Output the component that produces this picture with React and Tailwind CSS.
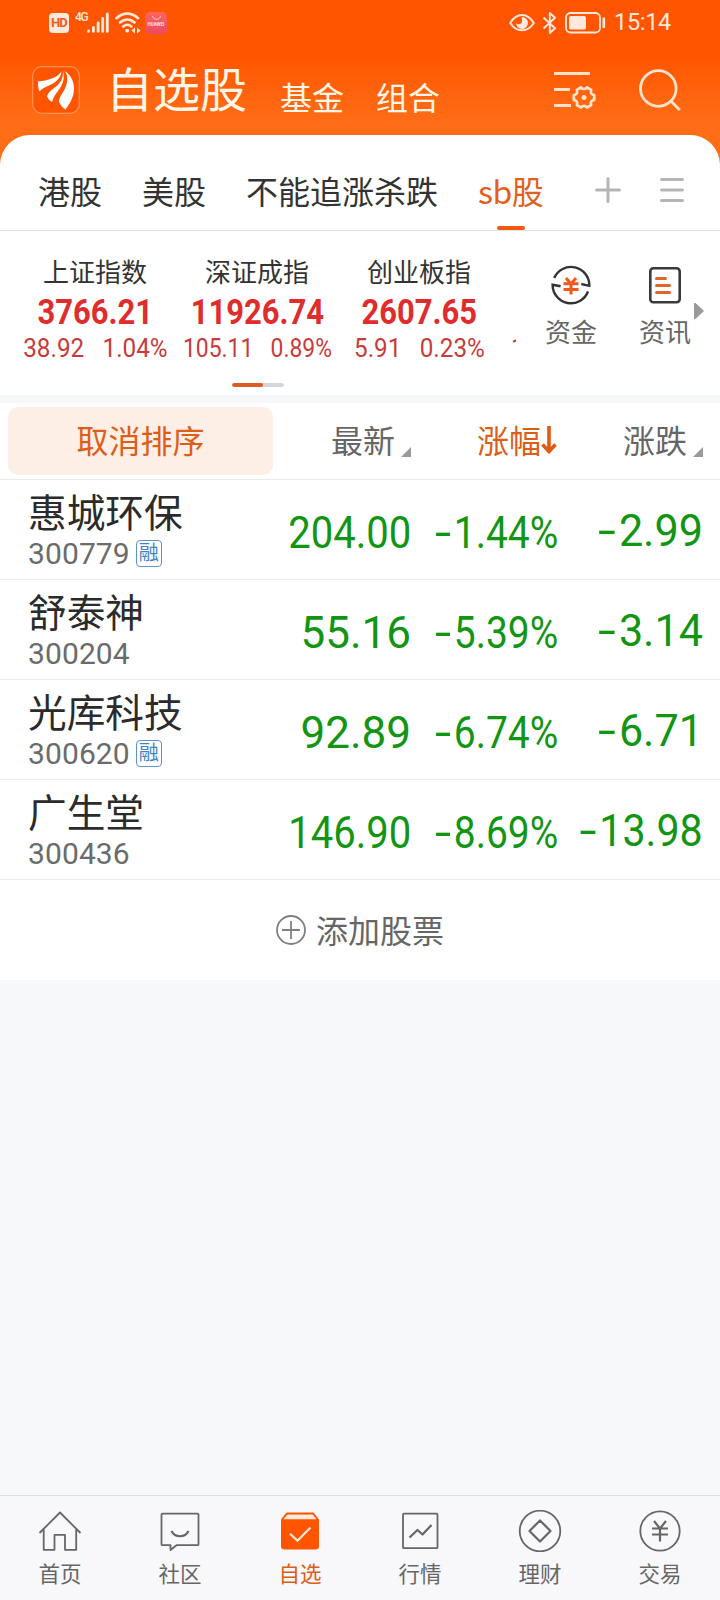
import React from "react";

const CJK = "font-['Noto_Sans_CJK_SC',sans-serif]";
const NUM = "font-['Roboto',sans-serif]";

const stocks = [
  { name: "惠城环保", code: "300779", margin: true, price: "204.00", pct: "1.44%", chg: "2.99" },
  { name: "舒泰神", code: "300204", margin: false, price: "55.16", pct: "5.39%", chg: "3.14" },
  { name: "光库科技", code: "300620", margin: true, price: "92.89", pct: "6.74%", chg: "6.71" },
  { name: "广生堂", code: "300436", margin: false, price: "146.90", pct: "8.69%", chg: "13.98" },
];

const indices = [
  { name: "上证指数", value: "3766.21", diff: "38.92", pct: "1.04%" },
  { name: "深证成指", value: "11926.74", diff: "105.11", pct: "0.89%" },
  { name: "创业板指", value: "2607.65", diff: "5.91", pct: "0.23%" },
];

function StatusBar() {
  return (
    <div className="flex h-[46px] items-center pl-[49px] pr-[48px] text-[#ffe9dc]">
      <div className={`${NUM} flex h-5 w-5 items-center justify-center rounded-[4px] bg-[#ffe9dc] text-[13px] font-bold tracking-[-0.8px] text-[#f4591a]`}>HD</div>
      <span className={`${NUM} ml-[6px] mb-[13px] w-[12px] text-[12px] font-medium leading-none tracking-[-1.2px]`}>4G</span>
      <svg className="h-[22px] w-[22px]" viewBox="0 0 22 22" stroke="currentColor" strokeWidth="2.8" strokeLinecap="round">
        <path d="M1.6 19.4v-.6M6.4 19.4v-4M11.1 19.4V11M15.7 19.4V6.5M20.3 19.4V2" />
      </svg>
      <svg className="ml-[6px] h-[22px] w-[26px]" viewBox="0 0 26 22" fill="none" stroke="currentColor" strokeWidth="2.6" strokeLinecap="round">
        <path d="M1.500 6.200C8 .1 16.500 .1 23 6.200M5 10.500c4.500-4 10-4 14.500 0M8.300 14.500c2.500-2.200 5.500-2.200 8 0" />
        <circle cx="12.200" cy="18.700" r="1.900" fill="currentColor" stroke="none" />
        <path d="M20 15.500v6l-3.500-3zM22 15.500v6l3.500-3z" fill="currentColor" stroke="none" />
      </svg>
      <div className="ml-[4px] flex h-[22px] w-[22px] flex-col items-center rounded-[5px] bg-gradient-to-b from-[#ff6459] to-[#e94b63] pt-[4px] text-[#ffe4e0]">
        <svg className="h-[4px] w-[9px]" viewBox="0 0 9 4" fill="none" stroke="currentColor" strokeWidth=".9"><path d="M.5 0c1 4.500 7 4.500 8 0" /></svg>
        <span className={`${NUM} mt-[2px] text-[4.5px] font-bold leading-[5px]`}>HUAWEI</span>
      </div>
      <div className="ml-auto flex items-center">
        <svg className="h-[20px] w-[26px]" viewBox="0 0 26 20" fill="none" stroke="currentColor" strokeWidth="2">
          <path d="M1.200 10C7.500-.8 18.500-.8 24.800 10 18.500 19.800 7.500 19.800 1.200 10z" />
          <path d="M13 4a6 6 0 1 1-6 6c2 2.500 6.500 1 6-2.500-.1-1.300-.6-2.500 0-3.500z" fill="currentColor" stroke="none" />
        </svg>
        <svg className="ml-[7px] h-[22px] w-[15px]" viewBox="0 0 15 22" fill="none" stroke="currentColor" strokeWidth="1.900" strokeLinejoin="round">
          <path d="M1.500 5.500 13 16.300 7.800 21V1L13 5.700 1.500 16.500" />
        </svg>
        <svg className="ml-[8px] h-[22px] w-[41px]" viewBox="0 0 41 22" fill="none" stroke="currentColor" strokeWidth="1.800">
          <rect x="1" y="1" width="34" height="19.500" rx="4.500" />
          <rect x="4" y="4" width="17" height="13.500" rx="1.800" fill="currentColor" stroke="none" />
          <path d="M38.800 6.500v8.500" strokeWidth="2.600" strokeLinecap="round" />
        </svg>
        <span className={`${NUM} ml-[8px] w-[58px] text-[23.5px] leading-none tracking-[-0.3px]`}>15:14</span>
      </div>
    </div>
  );
}

function Header() {
  return (
    <div className={`${CJK} flex h-[89px] items-center pb-[2px] pl-8 text-[#fff6e6]`}>
      <svg className="h-12 w-12" viewBox="0 0 48 48">
        <rect x=".7" y=".7" width="46.600" height="46.600" rx="9" fill="#ff5500" stroke="#ff9158" strokeWidth="1.200" />
        <path d="M6 15.500C16 14.500 25 12 29.500 5.500 29 12 23 17 17 19.500c-4 1.700-7 3-9.500 6C6 22 5.800 19 6 15.500z" fill="#fff" />
        <path d="M31 4.500C31.800 13 27 19 21.500 22.500c-3 2-6 5-6.500 8 1.300 2.700 3 4.500 5 5.500 1-4 3.500-8 7-12.500 4-5.500 6-12 4-19z" fill="#fff" />
        <path d="M32.500 5C37 10 35.500 17.500 32.500 23.500c-2.500 4.500-5.500 8-5.500 12.500 1.500 3 3.500 5.500 6.500 7.500C39 36 42 29.500 42 22.500 42 14.500 38 8 32.500 5z" fill="#fff" />
      </svg>
      <span className="ml-[26px] -mt-[6px] text-[47px] leading-none">自选股</span>
      <span className="ml-[33px] mt-[13px] text-[32px] leading-none">基金</span>
      <span className="ml-8 mt-[13px] text-[32px] leading-none">组合</span>
      <svg className="ml-[113px] h-[40px] w-[44px]" viewBox="0 0 44 40" fill="none" stroke="#ffe3cb" strokeWidth="3.200">
        <path d="M1 3.500h36M1 19.500h16M1 35.500h17" />
        <path transform="translate(31 27.500) scale(.95)" strokeWidth="2.900" strokeLinejoin="round" d="M10.700-2.500V2.500Q6.100 3.500 7.500 8L3.200 10.500Q0 7-3.200 10.500L-7.500 8Q-6.100 3.500-10.700 2.500V-2.500Q-6.100-3.500-7.500-8L-3.200-10.500Q0-7 3.200-10.500L7.500-8Q6.100-3.500 10.700-2.500z" />
        <circle cx="31" cy="27.500" r="2.500" fill="#ffe3cb" stroke="none" />
      </svg>
      <svg className="ml-[42px] h-[42px] w-[42px]" viewBox="0 0 42 42" fill="none" stroke="#ffe3cb" strokeWidth="2.800">
        <circle cx="19.300" cy="19.500" r="17.800" />
        <path d="m31.800 32 9 9" />
      </svg>
    </div>
  );
}

function Tabs() {
  return (
    <div className={`${CJK} flex h-[96px] items-center border-b border-[#e2e2e2] pl-[38px] text-[32px] text-[#333]`}>
      <div className="flex h-full items-center gap-10 pt-[14px] leading-none">
        <span>港股</span>
        <span>美股</span>
        <span>不能追涨杀跌</span>
        <div className="relative -mt-[14px] flex h-[95px] items-center pt-[15px] text-[#e2601c]">
          <span className="w-[66px] whitespace-nowrap tracking-[-0.5px]">sb股</span>
          <span className="absolute bottom-0 left-[19px] h-1 w-7 rounded-sm bg-[#ee5a12]" />
        </div>
      </div>
      <svg className="ml-[51px] mt-[15px] h-[26px] w-[26px]" viewBox="0 0 26 26" stroke="#b5b5b5" strokeWidth="3" strokeLinecap="round"><path d="M13 1.500v23M1.500 13h23" /></svg>
      <svg className="ml-[39px] mt-[15px] h-[26px] w-[24px]" viewBox="0 0 24 26" stroke="#b5b5b5" strokeWidth="3" strokeLinecap="round"><path d="M1.500 2.500h21M1.500 13h21M1.500 23.500h21" /></svg>
    </div>
  );
}

function IndexStrip() {
  return (
    <div className="flex h-[164px]">
      <div className="relative w-[516px] overflow-hidden">
        <div className="flex w-[700px] pl-[14px]">
          {indices.map((it) => (
            <div key={it.name} className="flex w-[162px] shrink-0 flex-col items-center whitespace-nowrap pt-[27px]">
              <div className={`${CJK} text-[26px] leading-[26px] text-[#333]`}>{it.name}</div>
              <div className={`${NUM} mt-[10px] scale-x-[.885] text-[35px] font-bold leading-[38px] text-[#df2c2c]`}>{it.value}</div>
              <div className={`${NUM} mt-[4px] flex gap-[19px] text-[25px] leading-[26px] text-[#c93a3a] ${it.diff.length > 5 ? "scale-x-[.915]" : "scale-x-[.97]"}`}>
                <span>{it.diff}</span>
                <span>{it.pct}</span>
              </div>
            </div>
          ))}
          <div className={`${NUM} pl-[11px] pt-[105px] text-[25px] leading-[26px] text-[#c93a3a]`}>1</div>
        </div>
        <div className="absolute bottom-[8px] left-[232px] h-1 w-[52px] overflow-hidden rounded-sm bg-[#d3d6da]">
          <div className="h-full w-[31px] rounded-sm bg-[#dc5c20]" />
        </div>
      </div>
      <div className={`${CJK} flex text-[26px] leading-[26px] text-[#666]`}>
        <div className="ml-[29px] flex w-[52px] flex-col items-center pt-[34px]">
          <svg className="h-10 w-10" viewBox="0 0 40 40" fill="none" stroke="#333" strokeWidth="2.400">
            <path d="M3.200 13A18.300 18.300 0 0 1 38.300 20.800l-8-1.800M37 26.500A18.300 18.300 0 0 1 1.600 19.800l8 1.500" />
            <path d="m15 13 5 6 5-6M12.500 18.800h15M12.500 24.500h15M20 18.500v11" stroke="#f2591a" strokeWidth="3" />
          </svg>
          <span className="mt-[13px] whitespace-nowrap">资金</span>
        </div>
        <div className="ml-[42px] flex w-[52px] flex-col items-center pt-[34px]">
          <svg className="h-10 w-8" viewBox="0 0 32 40" fill="none" stroke="#3a3a3a" strokeWidth="2.600">
            <rect x="1.300" y="3.300" width="29.400" height="34" rx="3" />
            <path d="M7.500 13.500h9M7.500 20.500h13M7.500 27.500h13" stroke="#e2642a" strokeWidth="3" strokeLinecap="round" />
          </svg>
          <span className="mt-[13px] whitespace-nowrap">资讯</span>
        </div>
        <svg className="ml-[3px] mt-[72px] h-4 w-[10px]" viewBox="0 0 10 16"><path d="M0 0h1.500l8.500 8-8.500 8H0z" fill="#999" /></svg>
      </div>
    </div>
  );
}

function Corner({ className }) {
  return <svg className={`mt-[21px] h-[10px] w-[10px] ${className}`} viewBox="0 0 10 10"><path d="M10 0v10H0z" fill="#9a9a9a" /></svg>;
}

function SortBar() {
  return (
    <div className={`${CJK} flex h-[77px] border-b border-[#eaeaea] pl-2 pt-1 text-[32px] leading-none text-[#666]`}>
      <div className="flex h-[68px] w-[265px] items-center justify-center rounded-[10px] bg-[#fdeee6] pb-[4px] text-[#dc5e18]">取消排序</div>
      <div className="flex h-[68px] items-center">
        <span className="ml-[58px] -mt-[4px]">最新</span>
        <Corner className="ml-[6px]" />
        <span className="ml-[66px] -mt-[4px] text-[#dc5e18]">涨幅</span>
        <svg className="-mt-[2px] h-[28px] w-[16px]" viewBox="0 0 16 28" fill="none" stroke="#e05a10" strokeWidth="3.600"><path d="M8 0v25M1.500 18.500 8 25.500l6.500-7" /></svg>
        <span className="ml-[66px] -mt-[4px]">涨跌</span>
        <Corner className="ml-[6px]" />
      </div>
    </div>
  );
}

function Minus() {
  return <span className="mr-[5px] inline-block origin-right translate-x-[2px] scale-x-150">-</span>;
}

function StockRow({ s }) {
  return (
    <div className="flex h-[100px] border-b border-[#ebebeb] pl-[28px] text-[#129512]">
      <div className="w-[200px] pt-[9px]">
        <div className={`${CJK} whitespace-nowrap text-[38.7px] leading-[42px] text-[#2b2b2b]`}>{s.name}</div>
        <div className="mt-[5px] flex h-[36px] items-center">
          <span className={`${NUM} text-[30px] leading-none tracking-[0.1px] text-[#6b6b6b]`}>{s.code}</span>
          {s.margin && (
            <span className={`${CJK} -mt-[2px] ml-[6px] flex h-[27px] w-[26px] items-center justify-center rounded-[4px] border-[1.5px] border-[#5b94cc] pb-[2px] text-[20px] leading-none text-[#3f83c6]`}>融</span>
          )}
        </div>
      </div>
      <div className={`${NUM} flex w-[183px] items-center justify-end whitespace-nowrap pt-[7px] text-[44px] leading-none`}>
        <span className={s.price.length > 5 ? "origin-right scale-x-[.91]" : ""}>{s.price}</span>
      </div>
      <div className={`${NUM} flex w-[147px] items-center justify-end whitespace-nowrap pt-[7px] text-[44px] leading-none`}>
        <span className="origin-right scale-x-[.885]"><Minus />{s.pct}</span>
      </div>
      <div className={`${NUM} flex w-[145px] items-center justify-end whitespace-nowrap pt-[3px] text-[44px] leading-none`}>
        <span className={s.chg.length > 4 ? "origin-right scale-x-[.935]" : "origin-right scale-x-[.98]"}><Minus />{s.chg}</span>
      </div>
    </div>
  );
}

const G = { fill: "none", stroke: "#666", strokeWidth: 1.8, strokeLinejoin: "round" };

const nav = [
  { label: "首页", icon: <path {...G} d="M1.500 23 22 2.500 42.500 23M5.700 19.500V39.800H16.500V24.800H27V39.800H38.200V19.500" /> },
  { label: "社区", icon: <g {...G}><path d="M4.500 3.700h35a1 1 0 0 1 1 1v29.500a1 1 0 0 1-1 1H18.500L12.500 40v-4.800h-8a1 1 0 0 1-1-1V4.700a1 1 0 0 1 1-1z" /><path strokeWidth="2.200" d="M13.500 21c3.500 7 13.500 7 17 0" /></g> },
  { label: "自选", active: true, icon: <g><path d="M8.500 2.500h27l5.500 7V36a3.500 3.500 0 0 1-3.500 3.500h-31A3.500 3.500 0 0 1 3 36V9.500z" fill="#ff5500" /><path d="M9.300 4.500h25.400l3.800 4.700h-33z" fill="#ffe9dc" /><path d="m12 23.800 7.500 7L32.500 17.500" fill="none" stroke="#ffe9dc" strokeWidth="2.200" /></g> },
  { label: "行情", icon: <g {...G}><rect x="5" y="3.700" width="34.500" height="34.500" rx="1" /><path strokeWidth="2.200" d="m11.500 27.500 8-7.500 5 4.500 9-9.500" /></g> },
  { label: "理财", icon: <g {...G}><circle cx="22" cy="21" r="20.300" /><path strokeWidth="2.200" d="M22 10.500 32.500 21 22 31.500 11.500 21z" /></g> },
  { label: "交易", icon: <g {...G}><circle cx="22" cy="21" r="19.700" /><path strokeWidth="2.200" d="m16 11 6 7.500 6-7.500M14 18.500h16M14 24.500h16M22 18.500v13" /></g> },
];

export default function App() {
  return (
    <div className="flex h-[1600px] w-[720px] flex-col overflow-hidden bg-[#f7f8fa]">
      <div className="bg-[#ff6d17]">
        <div className="bg-[linear-gradient(180deg,#ff5500_0px,#ff5500_54px,#ff6d17_122px)]">
          <StatusBar />
          <Header />
        </div>
        <div className="rounded-t-[30px] bg-white">
          <Tabs />
          <IndexStrip />
        </div>
      </div>
      <div className="h-2 bg-[#f5f7f9]" />
      <div className="bg-white">
        <SortBar />
        {stocks.map((s) => <StockRow key={s.code} s={s} />)}
        <div className={`${CJK} flex h-[100px] items-center pl-[276px] text-[32px] leading-none text-[#666]`}>
          <svg className="h-[30px] w-[30px]" viewBox="0 0 30 30" fill="none" stroke="#808084" strokeWidth="1.800"><circle cx="15" cy="15" r="14" /><path d="M15 6v18M6 15h18" /></svg>
          <span className="ml-[10px] -mt-[2px]">添加股票</span>
        </div>
      </div>
      <div className="mt-auto grid h-[105px] grid-cols-6 border-t border-[#dde0e2] bg-[#f8f8fb]">
        {nav.map((n) => (
          <div key={n.label} className={`${CJK} flex flex-col items-center pt-[14px] text-[21.5px] leading-[22px] ${n.active ? "text-[#dc5e18]" : "text-[#666]"}`}>
            <svg className="h-[42px] w-11" viewBox="0 0 44 42">{n.icon}</svg>
            <span className="mt-[10px]">{n.label}</span>
          </div>
        ))}
      </div>
    </div>
  );
}
